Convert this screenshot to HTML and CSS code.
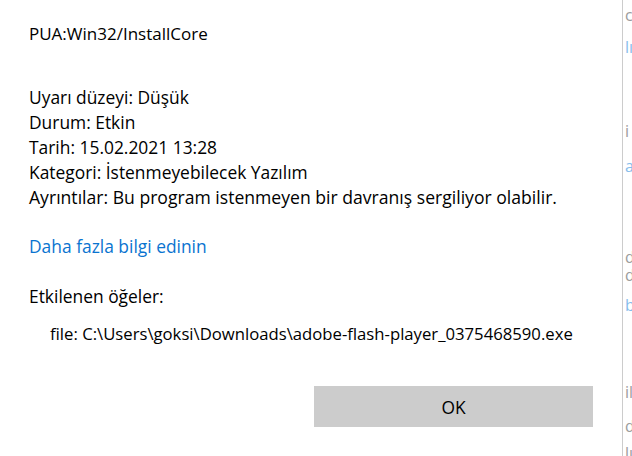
FILE: index.html
```html
<!DOCTYPE html>
<html lang="tr">
<head>
<meta charset="utf-8">
<link rel="stylesheet" href="styles.css">
</head>
<body>
<div class="screen">
  <main class="dialog">
    <h1 class="title">PUA:Win32/InstallCore</h1>
    <div class="details">
      <div class="row">Uyarı düzeyi: Düşük</div>
      <div class="row">Durum: Etkin</div>
      <div class="row">Tarih: 15.02.2021 13:28</div>
      <div class="row">Kategori: İstenmeyebilecek Yazılım</div>
      <div class="row">Ayrıntılar: Bu program istenmeyen bir davranış sergiliyor olabilir.</div>
    </div>
    <a class="link" href="#">Daha fazla bilgi edinin</a>
    <div class="affected-title">Etkilenen öğeler:</div>
    <div class="affected-item">file: C:\Users\goksi\Downloads\adobe-flash-player_0375468590.exe</div>
    <div class="actions">
      <button class="ok">OK</button>
    </div>
  </main>
  <aside class="behind">
    <div class="frag f1">c</div>
    <div class="frag blue f2">lı</div>
    <div class="frag f3">i</div>
    <div class="frag blue f4">a</div>
    <div class="frag pair f5">d<br>dı</div>
    <div class="frag blue f7">b</div>
    <div class="frag f8">ili</div>
    <div class="frag f9">d</div>
    <div class="frag f10">lı</div>
  </aside>
</div>
</body>
</html>
```
FILE: styles.css
```css
html, body {
  margin: 0;
  padding: 0;
  background: #ffffff;
}
body {
  font-family: "Open Sans", "Noto Sans", sans-serif;
  font-size: 17.4px;
  color: #000000;
}
.screen {
  display: flex;
  width: 632px;
  height: 456px;
  overflow: hidden;
}
.dialog {
  width: 593px;
  flex: none;
  padding: 21px 0 0 29px;
  border-right: 1px solid #cccccc;
  display: flex;
  flex-direction: column;
  align-items: flex-start;
  line-height: 25px;
}
.dialog > * {
  flex: none;
}
.title {
  margin: 0 0 39px 0;
  font-size: 17px;
  font-weight: normal;
  line-height: 25px;
}
.details .row {
  height: 25px;
  white-space: nowrap;
}
.details .row:last-child {
  font-size: 17.6px;
}
.link {
  margin-top: 24px;
  color: #0a74d0;
  text-decoration: none;
}
.affected-title {
  margin-top: 25px;
}
.affected-item {
  margin-top: 12px;
  padding-left: 21px;
  white-space: nowrap;
  font-size: 16.7px;
}
.actions {
  align-self: stretch;
  display: flex;
  justify-content: flex-end;
  padding-right: 29px;
  margin-top: 40px;
}
.ok {
  width: 279px;
  height: 41px;
  border: none;
  background: #cccccc;
  font-family: inherit;
  font-size: 17.4px;
  color: #000000;
  padding: 0;
}
.behind {
  flex: 1;
  display: flex;
  flex-direction: column;
  padding-left: 2px;
  font-size: 16px;
  color: #9c9c9c;
  white-space: nowrap;
  overflow: hidden;
}
.frag {
  flex: none;
  height: 14px;
  line-height: 14px;
}
.frag.pair {
  height: 36px;
  line-height: 18px;
}
.frag.blue { color: #86bdec; }
.f1 { margin-top: 8px; }
.f2 { margin-top: 18px; }
.f3 { margin-top: 70px; }
.f4 { margin-top: 21px; }
.f5 { margin-top: 75px; }
.f7 { margin-top: 14px; }
.f8 { margin-top: 73px; }
.f9 { margin-top: 20px; }
.f10 { margin-top: 13px; }
```
